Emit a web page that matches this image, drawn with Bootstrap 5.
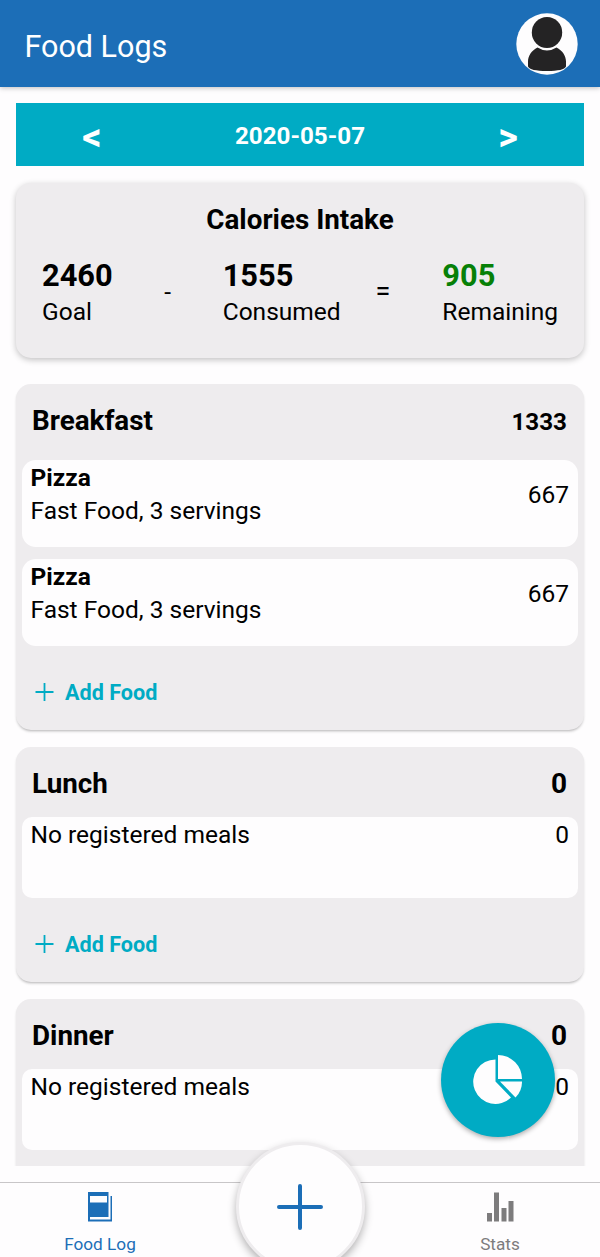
<!DOCTYPE html>
<html lang="en">
<head>
<meta charset="utf-8">
<meta name="viewport" content="width=device-width, initial-scale=1">
<title>Food Logs</title>
<link href="https://cdn.jsdelivr.net/npm/bootstrap@5.3.0/dist/css/bootstrap.min.css" rel="stylesheet">
<style>
  :root { --blue: #1c6eb7; --teal: #00abc4; --panel: #eeecee; --paper: #fefdfe; }
  body { font-family: Roboto, "Liberation Sans", sans-serif; font-size: 24.5px; line-height: 33px; color: #000; background: var(--paper); height: 1257px; overflow: hidden; }
  .topbar { height: 87px; background: var(--blue); padding: 0 22.5px 0 24.5px; box-shadow: 0 1px 5px rgba(0,0,0,.25); z-index: 2; }
  .topbar h1 { font-size: 30.5px; line-height: 36px; margin: 7px 0 0; font-weight: 400; }
  .avatar { margin-top: 1px; }
  .log-area { height: 1079px; padding: 16px 16px 0; overflow: hidden; }
  .datebar { height: 63px; background: var(--teal); padding: 0 64px 0 64px; }
  .date-text { font-size: 24.2px; margin-top: 4px; }
  .arrow { font-size: 38px; width: 24px; margin-top: 5px; }
  .panel { background: var(--panel); border-radius: 15px; box-shadow: 0 2px 3px -1px rgba(0,0,0,.3); }
  .summary { height: 175px; margin-top: 16.5px; padding: 20.5px 26px 0; box-shadow: 0 2px 6px rgba(0,0,0,.24); }
  .summary h2, .meal h2 { font-size: 27.8px; line-height: 34px; font-weight: 700; margin: 0; }
  .figure-num { font-size: 30.8px; line-height: 37px; font-weight: 700; margin-bottom: 1px; }
  .sums { margin-top: 20px; }
  .op { margin-top: 18px; width: 14px; text-align: center; }
  .op-minus { margin-left: 48px; }
  .op-equals { margin-left: 35px; font-size: 27px; }
  .sum-consumed { margin-left: 48px; }
  .left-green { color: #078007; }
  .meal { padding: 0 6px; height: 235px; margin-top: 17px; }
  .meal-big { height: 346px; margin-top: 26.5px; }
  .meal-head { height: 70px; padding: 20px 11px 0 10px; }
  .meal-big .meal-head { height: 76px; }
  .total { font-size: 28px; }
  .total-sm { font-size: 24.2px; margin-top: 2px; }
  .entry { background: var(--paper); border-radius: 10px; height: 81px; padding: 1px 9px 0 8.5px; }
  .meal-big .entry { border-radius: 14px; height: 86.5px; margin-bottom: 12.8px; }
  .kcal { margin-top: 17px; }
  .add { color: var(--teal); font-size: 21.6px; font-weight: 700; padding-left: 13px; gap: 11px; margin-top: 30px; }
  .tabs { height: 75px; margin-top: 16px; border-top: 1px solid #c8c6c8; font-size: 17.2px; line-height: 20px; }
  .tab { width: 200px; padding-top: 9px; }
  .tab span { margin-top: 12px; }
  .tab-on { color: var(--blue); }
  .tab-off { color: #7d7c7d; }
  .add-round { width: 129px; height: 129px; left: 235.5px; top: 1142px; background: var(--paper); border: 3px solid #eeecee; box-shadow: 0 4px 8px rgba(0,0,0,.3); z-index: 3; }
  .chart-fab { width: 114px; height: 114px; left: 440.5px; top: 1023px; background: var(--teal); box-shadow: 0 2px 5px rgba(0,0,0,.32); z-index: 3; }
</style>
</head>
<body class="position-relative d-flex flex-column">
<header class="topbar d-flex justify-content-between align-items-center text-white flex-shrink-0 position-relative">
  <h1>Food Logs</h1>
  <svg class="avatar" width="62" height="62" viewBox="0 0 62 62">
    <circle cx="31" cy="31" r="30.700" fill="#fefdfe"/>
    <path d="M21.500 34.500Q31 40.500 40.500 34.500C46.500 37.500 50 43 50 48.500V53.500Q48 58 31 58Q14 58 12 53.500V48.500C12 43 15.500 37.500 21.500 34.500Z" fill="#242324"/>
    <ellipse cx="31" cy="19.500" rx="15.200" ry="15.500" fill="#242324"/>
  </svg>
</header>

<main class="log-area flex-shrink-0">
  <div class="datebar d-flex justify-content-between align-items-center text-white fw-bold">
    <span class="arrow text-center">&lt;</span>
    <span class="date-text">2020-05-07</span>
    <span class="arrow text-center">&gt;</span>
  </div>

  <section class="panel summary">
    <h2 class="text-center">Calories Intake</h2>
    <div class="sums d-flex">
      <div><div class="figure-num">2460</div><div>Goal</div></div>
      <div class="op op-minus">-</div>
      <div class="sum-consumed"><div class="figure-num">1555</div><div>Consumed</div></div>
      <div class="op op-equals">=</div>
      <div class="ms-auto"><div class="figure-num left-green">905</div><div>Remaining</div></div>
    </div>
  </section>

  <section class="panel meal meal-big">
    <div class="meal-head d-flex justify-content-between"><h2>Breakfast</h2><b class="total-sm">1333</b></div>
    <div class="entry d-flex justify-content-between"><div><b>Pizza</b><div>Fast Food, 3 servings</div></div><span class="kcal">667</span></div>
    <div class="entry d-flex justify-content-between"><div><b>Pizza</b><div>Fast Food, 3 servings</div></div><span class="kcal">667</span></div>
    <div class="add d-flex align-items-center"><svg width="19" height="19" viewBox="0 0 19 19"><path d="M.5 9H18.500M9.500 0V18" stroke="currentColor" stroke-width="1.800"/></svg>Add Food</div>
  </section>

  <section class="panel meal">
    <div class="meal-head d-flex justify-content-between"><h2>Lunch</h2><b class="total">0</b></div>
    <div class="entry d-flex justify-content-between"><span>No registered meals</span><span>0</span></div>
    <div class="add d-flex align-items-center"><svg width="19" height="19" viewBox="0 0 19 19"><path d="M.5 9H18.500M9.500 0V18" stroke="currentColor" stroke-width="1.800"/></svg>Add Food</div>
  </section>

  <section class="panel meal">
    <div class="meal-head d-flex justify-content-between"><h2>Dinner</h2><b class="total">0</b></div>
    <div class="entry d-flex justify-content-between"><span>No registered meals</span><span>0</span></div>
  </section>
</main>

<nav class="tabs d-flex justify-content-between flex-shrink-0">
  <div class="tab tab-on d-flex flex-column align-items-center">
    <svg width="26" height="30" viewBox="0 0 26 30"><path d="M1 0H21.500V25H3V27.500H23.500V4H25V29.500H1ZM3 4V10.500H20V4Z" fill="currentColor" fill-rule="evenodd"/></svg>
    <span>Food Log</span>
  </div>
  <div class="tab tab-off d-flex flex-column align-items-center">
    <svg width="28" height="30" viewBox="0 0 28 30"><path d="M1 21H6V29.500H1ZM8 0.500H13V29.500H8ZM15.500 16H20.500V29.500H15.500ZM22.500 9H27.500V29.500H22.500Z" fill="currentColor"/></svg>
    <span>Stats</span>
  </div>
</nav>

<div class="chart-fab position-absolute rounded-circle d-flex align-items-center justify-content-center">
  <svg width="50" height="50" viewBox="0 0 50 50" fill="#fefdfe"><path d="M22.500 4.500V26.500L38 42.500A22.200 22.200 0 1 1 22.500 4.500Z"/><path d="M25 0A24 24 0 0 1 49 24H25Z"/><path d="M27 26.500H49A22 22 0 0 1 42.500 42.500Z"/></svg>
</div>
<div class="add-round position-absolute rounded-circle d-flex align-items-center justify-content-center">
  <svg width="46" height="46" viewBox="0 0 46 46"><path d="M2 23H44M23 2V44" stroke="#1c6eb7" stroke-width="4" stroke-linecap="round"/></svg>
</div>
<script src="https://cdn.jsdelivr.net/npm/bootstrap@5.3.0/dist/js/bootstrap.bundle.min.js"></script>
</body>
</html>
